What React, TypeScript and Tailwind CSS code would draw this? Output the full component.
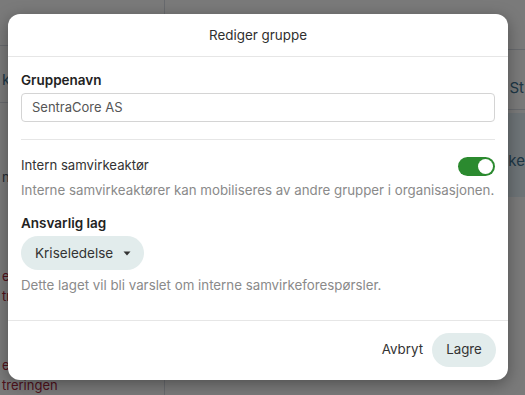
const Toggle = ({ on }: { on: boolean }) => (
  <div
    className={`w-[37px] h-[19px] rounded-full flex items-center px-[2px] ${
      on ? "bg-[#2b8a2f] justify-end" : "bg-gray-300 justify-start"
    }`}
  >
    <div className="w-[15px] h-[15px] rounded-full bg-white" />
  </div>
);

export default function App() {
  return (
    <div
      className="relative w-[525px] h-[395px] overflow-hidden bg-[#f4f5f5] text-[#2b2b2b]"
      style={{ fontFamily: "Inter, 'Noto Sans', sans-serif" }}
    >
      {/* page behind the dialog */}
      <div className="flex h-full">
        <div className="w-[165px] border-r border-gray-300 flex flex-col text-[13px]">
          <div className="h-[50px] border-b border-gray-300" />
          <div className="h-[60px] border-b border-gray-300 flex items-end pb-[10px] pl-[2px] text-[#3c6f8c] text-[15px]">
            ke
          </div>
          <div className="mt-[65px] pl-[2px] text-gray-600">nd</div>
          <div className="mt-[80px] pl-[2px] text-[#a0243a]">er</div>
          <div className="mt-[0px] pl-[2px] text-[#a0243a]">tr</div>
          <div className="mt-[50px] pl-[2px] text-[#a0243a]">er</div>
          <div className="mt-[0px] pl-[2px] text-[#a0243a]">treringen</div>
        </div>
        <div className="flex-1 flex flex-col">
          <div className="h-[50px] border-b border-gray-300" />
          <div className="h-[60px] border-b border-gray-300 flex justify-end items-end pb-[10px] text-[#3c6f8c] text-[15px] pr-[1px]">
            St
          </div>
          <div className="mt-[3px] h-[84px] bg-[#dce8ee] flex justify-end items-start pt-[37px] text-[#3c6f8c] text-[15px]">
            ke
          </div>
        </div>
      </div>

      {/* backdrop */}
      <div className="absolute inset-0 bg-black/50" />

      {/* dialog */}
      <div className="absolute left-[8px] top-[14px] w-[500px] h-[366px] bg-white rounded-[12px] shadow-[0_4px_16px_rgba(0,0,0,0.35)] flex flex-col">
        <div className="h-[43px] flex items-center justify-center border-b border-[#e6e6e6] text-[13.4px] text-[#2f2f2f]">
          Rediger gruppe
        </div>

        <div className="flex-1 px-[13px] pt-[13px]">
          <div className="text-[13.5px] font-semibold leading-[20px] text-[#222]">Gruppenavn</div>
          <div className="mt-[3px] h-[29px] border border-[#d4d4d4] rounded-[4px] flex items-center px-[10px] text-[13px] text-[#555]">
            SentraCore AS
          </div>

          <div className="mt-[17px] border-t border-[#e6e6e6]" />

          <div className="mt-[16px] flex items-center justify-between h-[20px]">
            <span className="text-[13.2px] text-[#333]">Intern samvirkeaktør</span>
            <Toggle on />
          </div>
          <div className="mt-[4px] text-[13.3px] leading-[20px] text-[#8a8a8a] whitespace-nowrap">
            Interne samvirkeaktører kan mobiliseres av andre grupper i organisasjonen.
          </div>

          <div className="mt-[13px] text-[13.5px] font-semibold leading-[20px] text-[#222]">Ansvarlig lag</div>
          <button className="mt-[3px] h-[34px] w-[123px] rounded-full bg-[#e2ecec] flex items-center pl-[14px] gap-[10px] text-[13.5px] text-[#333]">
            Kriseledelse
            <svg width="8" height="5" viewBox="0 0 8 5">
              <path d="M0.5 0.5 L7.5 0.5 L4 4.5 Z" fill="#333" />
            </svg>
          </button>
          <div className="mt-[5px] text-[13.3px] leading-[20px] text-[#8a8a8a]">
            Dette laget vil bli varslet om interne samvirkeforespørsler.
          </div>
        </div>

        <div className="h-[60px] border-t border-[#e6e6e6] flex items-center justify-end gap-[9px] px-[12px] pb-[2px]">
          <button className="text-[13.3px] text-[#333]">Avbryt</button>
          <button className="h-[34px] w-[64px] rounded-full bg-[#e2ecec] text-[13.3px] text-[#333]">Lagre</button>
        </div>
      </div>
    </div>
  );
}
